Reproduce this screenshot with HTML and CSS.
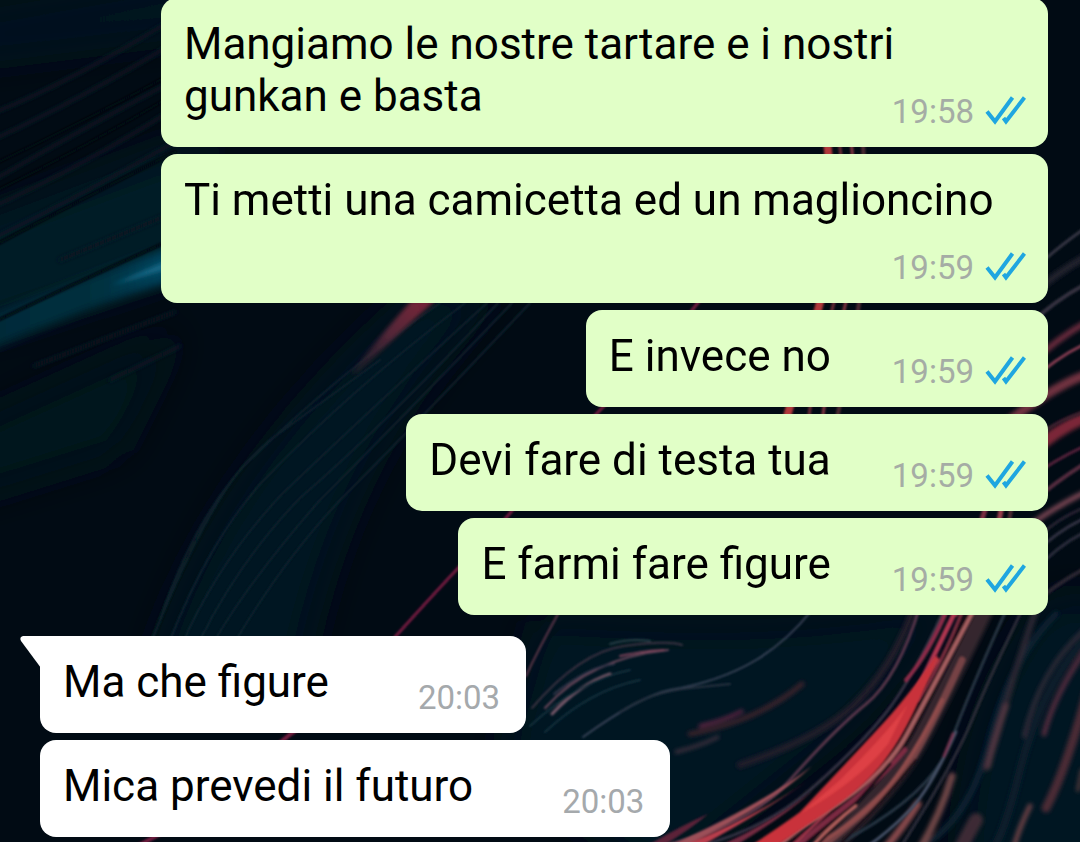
FILE: index.html
```
<!DOCTYPE html>
<html lang="it">
<head>
<meta charset="UTF-8">
<meta name="viewport" content="width=device-width, initial-scale=1.0">
<title>Chat</title>
<link rel="stylesheet" href="styles.css">
</head>
<body>
    <!-- wallpaper -->
    <svg class="wallpaper" viewBox="0 0 1080 842" preserveAspectRatio="xMidYMid slice" aria-hidden="true">
        <defs>
            <filter id="soft" filterUnits="userSpaceOnUse" x="-40" y="-40" width="1160" height="922"><feGaussianBlur stdDeviation="1"/></filter>
            <filter id="smear" filterUnits="userSpaceOnUse" x="-40" y="-40" width="1160" height="922"><feGaussianBlur stdDeviation="2"/></filter>
            <filter id="softer" filterUnits="userSpaceOnUse" x="-40" y="-40" width="1160" height="922"><feGaussianBlur stdDeviation="5"/></filter>
            <filter id="glow" filterUnits="userSpaceOnUse" x="-100" y="-100" width="1280" height="1042"><feGaussianBlur stdDeviation="20"/></filter>
            <linearGradient id="beam" x1="0" x2="1">
                <stop offset="0" stop-color="#022a38"/>
                <stop offset="0.6" stop-color="#04303f"/>
                <stop offset="1" stop-color="#074a66"/>
            </linearGradient>
            <linearGradient id="pink" x1="0" y1="1" x2="1" y2="0">
                <stop offset="0" stop-color="#3a2133" stop-opacity="0.3"/>
                <stop offset="0.5" stop-color="#542638"/>
                <stop offset="1" stop-color="#7c2438"/>
            </linearGradient>
            <symbol id="ticks" viewBox="0 0 42 36">
                <path d="M3 17.5L11 27.5L28.5 3.5M19.500 24L22 27.500L40.500 3.500" fill="none" stroke="#1fa6e0" stroke-width="4"/>
            </symbol>
        </defs>
        <rect width="1080" height="842" fill="#010b14"/>
        <g filter="url(#glow)">
            <path d="M-40 230L200 140V260L-40 340Z" fill="#021c28"/>
            <path d="M150 680Q210 470 420 290L500 290Q340 450 300 680Z" fill="#011722"/>
            <path d="M-40 430L180 330L120 450L-40 500Z" fill="#01131e"/>
            <path d="M540 620Q800 640 960 600L860 720Q760 800 660 880L500 760Z" fill="#021621"/>
            <path d="M960 880Q960 700 1050 600H1120V880Z" fill="#021520"/>
            <path d="M-40 20L200 -20V30L-40 60Z" fill="#021420"/>
        </g>

        <!-- blue beam and the faint lines over it -->
        <path d="M-20 320Q70 282 180 244V278Q80 310 -20 354Z" fill="url(#beam)" filter="url(#softer)"/>
        <path d="M112 285L175 257L175 267Z" fill="#156684" filter="url(#smear)"/>
        <g class="lines" stroke="#0a1823" stroke-width="4" filter="url(#smear)">
            <path d="M-10 114Q60 88 175 18"/>
            <path d="M-10 141Q80 100 175 42"/>
            <path d="M-10 182Q80 130 175 80"/>
            <path d="M-10 208Q80 168 175 108"/>
            <path d="M-10 240Q80 196 175 142"/>
            <path d="M60 260L175 212"/>
            <path d="M34 366L175 312"/>
            <path d="M110 380L180 346"/>
        </g>
        <g class="lines" stroke="#010710" stroke-width="3" filter="url(#soft)">
            <path d="M-10 166Q80 124 175 72"/>
            <path d="M-10 194Q80 150 175 94"/>
            <path d="M-10 248Q80 200 175 152"/>
            <path d="M-10 324Q60 290 175 238"/>
        </g>

        <!-- dim strands in the middle -->
        <g class="lines" stroke="#0b222d" stroke-width="2" filter="url(#soft)">
            <path d="M152 640Q200 520 240 470Q330 380 440 303"/>
            <path d="M170 640Q210 540 262 482Q350 390 465 303"/>
            <path d="M184 640Q220 560 282 494Q370 410 487 303"/>
            <path d="M200 640Q240 560 300 498Q390 420 498 303"/>
            <path d="M215 640Q250 580 320 500Q400 420 512 303"/>
            <path d="M236 640Q290 550 350 490Q420 420 530 303"/>
            <path d="M160 620Q200 500 270 440L380 360"/>
        </g>
        <path d="M350 374Q385 330 412 300H436Q400 332 358 373Z" fill="url(#pink)" filter="url(#smear)"/>
        <g class="lines" stroke="#731d40" filter="url(#soft)">
            <path d="M395 637Q430 598 460 566Q500 528 520 500Q570 440 606 404Q670 340 700 300" stroke-width="3"/>
            <path d="M270 752Q290 732 310 722M130 850L175 826" stroke-width="4"/>
        </g>

        <!-- thin curls above the last message -->
        <g class="lines" stroke-width="2" filter="url(#soft)">
            <path d="M558 614Q538 650 526 676" stroke="#5c3549"/>
            <path d="M532 708Q580 652 624 646T682 645" stroke="#3a3041"/>
            <path d="M545 708Q590 658 668 650" stroke="#69465a"/>
            <path d="M620 656Q650 650 664 650" stroke="#7b4259"/>
            <path d="M552 714Q580 684 610 674" stroke="#755668" stroke-width="3"/>
            <path d="M554 694Q590 666 614 664" stroke="#33364a"/>
            <path d="M610 644Q630 638 650 641" stroke="#263e46"/>
            <path d="M583 737Q640 696 670 690C740 678 780 650 812 610" stroke="#394357"/>
            <path d="M620 712Q650 692 690 688T730 684" stroke="#26313f"/>
            <path d="M530 726Q580 680 630 670" stroke="#14303c"/>
            <path d="M545 732Q590 690 640 680" stroke="#14303c"/>
        </g>
        <g class="lines" stroke-width="3" filter="url(#smear)">
            <path d="M690 734Q760 720 802 684" stroke="#3a202c" stroke-width="5"/>
            <path d="M700 726Q725 720 742 711" stroke="#74284a"/>
            <path d="M676 752Q700 746 718 737" stroke="#4c3543"/>
        </g>

        <!-- strands running down behind the sent messages -->
        <g class="lines" filter="url(#soft)">
            <path d="M826 130Q838 240 818 310T780 440" stroke="#b0393b" stroke-width="8"/>
            <path d="M838 130Q852 240 832 310T806 440" stroke="#6a2b36" stroke-width="3"/>
            <path d="M850 130Q862 240 844 310T820 440" stroke="#823540" stroke-width="3"/>
            <path d="M862 130Q870 240 858 310T832 440" stroke="#4c2932" stroke-width="4"/>
            <path d="M992 490Q980 520 956 614" stroke="#7b2d40" stroke-width="5"/>
            <path d="M1004 490Q1000 530 974 614" stroke="#963c4a" stroke-width="5"/>
            <path d="M1014 490Q1008 540 984 614" stroke="#4c2932" stroke-width="4"/>
        </g>

        <!-- right edge, upper part -->
        <g class="lines" filter="url(#smear)">
            <path d="M1030 296Q1060 270 1094 252" stroke="#20222d" stroke-width="7"/>
            <path d="M1030 364Q1060 336 1094 318" stroke="#6b2b3c" stroke-width="6"/>
            <path d="M1010 420Q1060 382 1094 372" stroke="#70303f" stroke-width="9"/>
            <path d="M1030 454Q1060 426 1094 414" stroke="#7b2839" stroke-width="12"/>
            <path d="M1026 528Q1060 503 1094 488" stroke="#7b4654" stroke-width="5"/>
        </g>
        <g class="lines" filter="url(#soft)">
            <path d="M1040 264Q1060 245 1094 222" stroke="#343443" stroke-width="3"/>
            <path d="M1030 324Q1060 296 1094 280" stroke="#34313f" stroke-width="4"/>
            <path d="M1030 382Q1060 354 1094 340" stroke="#823a50" stroke-width="3"/>
            <path d="M1044 432Q1060 418 1094 410" stroke="#3e222e" stroke-width="3"/>
            <path d="M1030 478Q1060 456 1094 442" stroke="#54233a" stroke-width="3"/>
            <path d="M1030 504Q1060 478 1094 458" stroke="#522c3e" stroke-width="4"/>
            <path d="M1040 536Q1060 516 1094 504" stroke="#252330" stroke-width="3"/>
            <path d="M1034 554Q1060 528 1094 514" stroke="#333243" stroke-width="3"/>
            <path d="M1034 572Q1060 542 1094 528" stroke="#292c3a" stroke-width="3"/>
            <path d="M1026 610Q1060 580 1094 564" stroke="#2a2630" stroke-width="4"/>
        </g>

        <!-- right side, lower part -->
        <g class="lines" filter="url(#smear)">
            <path d="M912 614Q890 670 855 704T740 765" stroke="#211a29" stroke-width="7"/>
            <path d="M1056 614Q1010 660 990 740T920 848" stroke="#0a2430" stroke-width="6"/>
            <path d="M1084 640Q1040 690 1020 770T990 848" stroke="#091f2b" stroke-width="8"/>
            <path d="M1036 610Q1018 660 1006 704T986 768" stroke="#2c2632" stroke-width="6"/>
            <path d="M1006 706Q994 740 988 766" stroke="#503540" stroke-width="6"/>
            <path d="M1084 630Q1040 670 1024 736" stroke="#332c39" stroke-width="4"/>
            <path d="M1084 652Q1054 696 1044 734" stroke="#522c3d" stroke-width="5"/>
            <path d="M1088 690Q1066 770 1046 808" stroke="#4b2b35" stroke-width="9"/>
            <path d="M1082 770L1078 790" stroke="#4b3639" stroke-width="4"/>
            <path d="M1030 806Q1020 826 1014 846" stroke="#6a4044" stroke-width="5"/>
            <path d="M976 820Q970 830 960 850" stroke="#3d2c35" stroke-width="14"/>
            <path d="M952 776Q940 816 918 852" stroke="#704647" stroke-width="7"/>
            <path d="M918 804Q900 832 880 854" stroke="#8b4b4e" stroke-width="7"/>
            <path d="M988 600Q940 700 917 742T828 848" stroke="#35252d" stroke-width="20"/>
        </g>
        <g class="lines" filter="url(#soft)">
            <path d="M1008 606Q970 690 950 744T830 848" stroke="#263443" stroke-width="3"/>
            <path d="M1024 606Q990 676 972 720T900 848" stroke="#2b2b37" stroke-width="3"/>
            <path d="M956 732Q930 790 908 812T865 848" stroke="#455065" stroke-width="3"/>
            <path d="M953 734L944 756" stroke="#70334e" stroke-width="3"/>
            <path d="M920 606Q898 678 866 704T790 780T650 848" stroke="#56364a" stroke-width="3"/>
            <path d="M944 610Q912 680 885 714T810 790T690 848" stroke="#343143" stroke-width="3"/>
            <path d="M948 608Q928 655 906 680" stroke="#8d294a" stroke-width="4"/>
            <path d="M962 660Q925 740 906 768T820 848" stroke="#764244" stroke-width="7"/>
            <path d="M942 700Q912 760 884 792T810 848" stroke="#8f4b4b" stroke-width="4"/>
            <path d="M972 606Q930 690 910 728T845 806T780 848" stroke="#130e16" stroke-width="12"/>
            <path d="M905 750Q880 780 846 806T790 852" stroke="#7d2c43" stroke-width="5"/>
            <path d="M868 774Q840 800 790 848" stroke="#9c3549" stroke-width="3"/>
            <path d="M976 606Q926 700 906 736T840 802T775 848" stroke="#a65f60" stroke-width="4"/>
            <path d="M890 764Q850 812 810 852" stroke="#171019" stroke-width="3"/>
            <path d="M916 760Q880 806 832 852" stroke="#140f18" stroke-width="3"/>
            <path d="M856 806Q830 826 808 850" stroke="#b4605d" stroke-width="3"/>
            <path d="M958 606Q930 664 912 700" stroke="#ad3550" stroke-width="5"/>
            <path d="M964 606Q942 664 918 700" stroke="#7b2d40" stroke-width="3"/>
            <path d="M936 660L900 720" stroke="#b93842" stroke-width="6"/>
        </g>
        <g filter="url(#soft)">
            <path d="M938 654Q906 698 886 720T800 812Q784 824 744 850H770Q800 830 815 820Q866 788 888 756Q912 724 938 654Z" fill="#c9323b"/>
            <path d="M908 704Q890 730 840 780L800 814Q860 780 888 744Z" fill="#de4044"/>
            <path d="M812 766Q760 806 660 850H676Q770 806 812 766Z" fill="#9c5058"/>
            <path d="M806 782Q750 820 672 850H694Q760 814 806 782Z" fill="#b83e4c"/>
            <path d="M814 790Q770 824 710 850H728Q780 820 814 790Z" fill="#712b3f"/>
            <path d="M708 814Q680 826 640 850H656Q690 830 708 814Z" fill="#5b2439"/>
        </g>
    </svg>

    <main class="chat">
        <div class="bubble out">
            <span class="text">Mangiamo le nostre tartare e i nostri gunkan e basta</span>
            <span class="meta"><time>19:58</time><svg class="ticks"><use href="#ticks"/></svg></span>
        </div>
        <div class="bubble out">
            <span class="text">Ti metti una camicetta ed un maglioncino</span>
            <span class="meta"><time>19:59</time><svg class="ticks"><use href="#ticks"/></svg></span>
        </div>
        <div class="bubble out">
            <span class="text">E invece no</span>
            <span class="meta"><time>19:59</time><svg class="ticks"><use href="#ticks"/></svg></span>
        </div>
        <div class="bubble out">
            <span class="text">Devi fare di testa tua</span>
            <span class="meta"><time>19:59</time><svg class="ticks"><use href="#ticks"/></svg></span>
        </div>
        <div class="bubble out">
            <span class="text">E farmi fare figure</span>
            <span class="meta"><time>19:59</time><svg class="ticks"><use href="#ticks"/></svg></span>
        </div>
        <div class="bubble in first">
            <span class="text">Ma che figure</span>
            <span class="meta"><time>20:03</time></span>
        </div>
        <div class="bubble in">
            <span class="text">Mica prevedi il futuro</span>
            <span class="meta"><time>20:03</time></span>
        </div>
    </main>
</body>
</html>
```
FILE: styles.css
```
* {
    box-sizing: border-box;
}
body {
    margin: 0;
    background-color: #010b14;
    font-family: Roboto, "Liberation Sans", sans-serif;
    color: #000;
}
.wallpaper {
    position: fixed;
    top: 0;
    left: 0;
    width: 100%;
    height: 100%;
    z-index: -1;
}
.lines {
    fill: none;
    stroke-linecap: round;
}
/* newest message stays at the bottom, older ones run off the top */
.chat {
    display: flex;
    flex-direction: column;
    justify-content: flex-end;
    gap: 7px;
    height: 100vh;
    padding: 0 32px 5px 40px;
    overflow: hidden;
}
.bubble {
    position: relative;
    flex: none;
    max-width: 88%;
    padding: 20px 22px 25px 23px;
    border-radius: 16px;
    font-size: 44px;
    line-height: 52px;
}
.bubble::after {
    content: "";
    display: block;
    clear: both;
}
.out {
    align-self: flex-end;
    background-color: #e1ffc7;
}
.in {
    align-self: flex-start;
    background-color: #fff;
}
.first {
    margin-top: 14px;
    border-top-left-radius: 0;
}
/* tail of the first message in a group */
.first::before {
    content: "";
    position: absolute;
    top: 0;
    left: -20px;
    width: 21px;
    height: 32px;
    background-color: #fff;
    clip-path: path("M21 0H3Q-1 1 1 5L21 32Z");
}
.meta {
    float: right;
    display: flex;
    align-items: center;
    gap: 10px;
    height: 52px;
    margin-left: 61px;
    padding-top: 32px;
    font-size: 33px;
    line-height: 20px;
    color: #a5aca5;
}
.in .meta {
    margin-left: 89px;
    margin-right: 4px;
    color: #a5a9ac;
}
.ticks {
    flex: none;
    width: 42px;
    height: 36px;
}
```
